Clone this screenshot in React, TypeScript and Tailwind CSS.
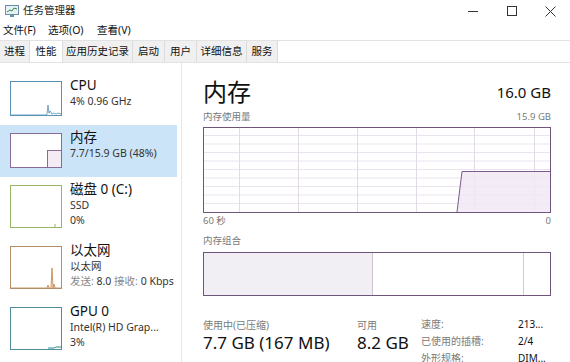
import React from "react";

const font = "font-['Noto_Sans','Noto_Sans_CJK_SC',sans-serif]";

type Item = {
  key: string;
  title: string;
  lines: React.ReactNode[];
  color: string;
  tall: boolean;
  selected?: boolean;
  draw: React.ReactNode;
};

function Thumb({ color, tall, children }: { color: string; tall: boolean; children: React.ReactNode }) {
  const h = tall ? 43 : 35;
  return (
    <svg width="52" height={h} viewBox={`0 0 52 ${h}`} className="shrink-0 bg-white">
      {children}
      <rect x="0.5" y="0.5" width="51" height={h - 1} fill="none" stroke={color} strokeWidth="1" />
    </svg>
  );
}

const items: Item[] = [
  {
    key: "cpu",
    title: "CPU",
    lines: ["4% 0.96 GHz"],
    color: "#5a92b6",
    tall: false,
    draw: (
      <polyline
        points="1,34 36,34 37,33 38,24 39,32 40,30 41,31 42,33 44,32 46,33 48,32 51,33"
        fill="#e8f1f7"
        stroke="#5a92b6"
        strokeWidth="0.8"
      />
    ),
  },
  {
    key: "mem",
    title: "内存",
    lines: ["7.7/15.9 GB (48%)"],
    color: "#8a6a97",
    tall: false,
    selected: true,
    draw: <rect x="37.5" y="17.5" width="14" height="17" fill="#f3ecf5" stroke="#8a6a97" strokeWidth="1" />,
  },
  {
    key: "disk",
    title: "磁盘 0 (C:)",
    lines: ["SSD", "0%"],
    color: "#95b765",
    tall: true,
    draw: <line x1="45" y1="42" x2="45" y2="39" stroke="#95b765" strokeWidth="1" />,
  },
  {
    key: "eth",
    title: "以太网",
    lines: [
      "以太网",
      <span key="s">
        <span className="text-[#8a8a8a]">发送: </span>8.0 <span className="text-[#8a8a8a]">接收: </span>0 Kbps
      </span>,
    ],
    color: "#b48e69",
    tall: true,
    draw: (
      <polyline
        points="1,42 37,42 38,39 39,42 41,42 42,22 43,42 44,38 45,42 51,42"
        fill="#f6eee6"
        stroke="#c08040"
        strokeWidth="0.8"
      />
    ),
  },
  {
    key: "gpu",
    title: "GPU 0",
    lines: ["Intel(R) HD Grap...", "3%"],
    color: "#4f8d9a",
    tall: true,
    draw: <polyline points="38,41 44,41 46,40 51,40" fill="none" stroke="#2f8a8a" strokeWidth="1" />,
  },
];

function Sidebar() {
  return (
    <div className="w-[182px] shrink-0 border-r border-[#e6e6e6] pt-[10px]">
      {items.map((it) => (
        <div
          key={it.key}
          className={`flex w-[177px] ${it.tall ? "h-[61px]" : "h-[52px]"} ${it.selected ? "bg-[#cce4f7]" : ""}`}
        >
          <div className="pl-[10px] pt-[8px]">
            <Thumb color={it.color} tall={it.tall}>
              {it.draw}
            </Thumb>
          </div>
          <div className="pl-[8px] pt-[4px] whitespace-nowrap">
            <div className="text-[13.5px] leading-[17px] text-[#111]">{it.title}</div>
            {it.lines.map((l, i) => (
              <div key={i} className="text-[10.5px] leading-[15px] text-[#333]">
                {l}
              </div>
            ))}
          </div>
        </div>
      ))}
    </div>
  );
}

function UsageGraph() {
  const w = 348;
  const h = 86;
  const vx = [36, 95, 154, 213, 271, 331];
  const hy = Array.from({ length: 9 }, (_, i) => 8.5 * (i + 1));
  return (
    <svg width={w} height={h} viewBox={`0 0 ${w} ${h}`} className="block">
      {hy.map((y) => (
        <line key={y} x1="0" y1={y} x2={w} y2={y} stroke="#ebe4ee" strokeWidth="1" />
      ))}
      {vx.map((x) => (
        <line key={x} x1={x + 0.5} y1="0" x2={x + 0.5} y2={h} stroke="#e2dae5" strokeWidth="1" />
      ))}
      <polygon points="254,85 259,44 347.5,44 347.5,85" fill="#f1e8f4" fillOpacity="0.85" />
      <polyline points="254,85 259,44.5 347.5,44.5" fill="none" stroke="#7c5a8a" strokeWidth="1" />
      <rect x="0.5" y="0.5" width={w - 1} height={h - 1} fill="none" stroke="#6f5579" strokeWidth="1" />
    </svg>
  );
}

function CompositionBar() {
  return (
    <div className="flex h-[44px] w-[348px] border border-[#6f5579]">
      <div className="w-[169px] bg-[#f2eff4] border-r border-[#cbc4ce]" />
      <div className="w-[151px] bg-white border-r border-[#cfcfcf]" />
      <div className="flex-1 bg-white" />
    </div>
  );
}

function Main() {
  return (
    <div className="flex-1 pl-[21px] pr-[19px] pt-[15px] min-w-0">
      <div className="flex items-center justify-between">
        <div className="text-[24px] leading-[28px] text-[#111]">内存</div>
        <div className="text-[15px] leading-[20px] text-[#111]">16.0 GB</div>
      </div>
      <div className="mt-[5px] flex justify-between text-[9.5px] leading-[12px] text-[#7a7a7a]">
        <span>内存使用量</span>
        <span>15.9 GB</span>
      </div>
      <div className="mt-[4px]">
        <UsageGraph />
      </div>
      <div className="mt-[2px] flex justify-between text-[9.5px] leading-[12px] text-[#7a7a7a]">
        <span>60 秒</span>
        <span>0</span>
      </div>
      <div className="mt-[8px] text-[9.5px] leading-[12px] text-[#7a7a7a]">内存组合</div>
      <div className="mt-[5px]">
        <CompositionBar />
      </div>
      <div className="mt-[20px] flex whitespace-nowrap">
        <div className="w-[154px] pt-[2px]">
          <div className="text-[10px] leading-[15px] text-[#7a7a7a]">使用中(已压缩)</div>
          <div className="text-[17px] leading-[20px] text-[#111]">7.7 GB (167 MB)</div>
        </div>
        <div className="w-[64px] pt-[2px]">
          <div className="text-[10px] leading-[15px] text-[#7a7a7a]">可用</div>
          <div className="text-[17px] leading-[20px] text-[#111]">8.2 GB</div>
        </div>
        <div className="flex text-[10px] leading-[17px]">
          <div className="w-[97px] text-[#7a7a7a]">
            <div>速度:</div>
            <div>已使用的插槽:</div>
            <div>外形规格:</div>
          </div>
          <div className="text-[#111]">
            <div>213...</div>
            <div>2/4</div>
            <div>DIM...</div>
          </div>
        </div>
      </div>
    </div>
  );
}

const tabs = [
  { label: "进程", w: "w-[30px]" },
  { label: "性能", w: "w-[33px]", active: true },
  { label: "应用历史记录", w: "w-[70px]" },
  { label: "启动", w: "w-[32px]" },
  { label: "用户", w: "w-[32px]" },
  { label: "详细信息", w: "w-[50px]" },
  { label: "服务", w: "w-[31px]" },
];

export default function App() {
  return (
    <div className={`w-[570px] h-[362px] overflow-hidden bg-white flex flex-col ${font}`}>
      <div className="h-[22px] flex items-center shrink-0">
        <svg width="15" height="13" viewBox="0 0 15 13" className="ml-[5px]">
          <rect x="0.5" y="0.5" width="13" height="9" fill="#e6f1f8" stroke="#6a8ea8" />
          <polyline points="2,7 5,5 7,6 9,3 12,4" fill="none" stroke="#3a8a3a" strokeWidth="1" />
          <rect x="5" y="10" width="4" height="2" fill="#6a8ea8" />
        </svg>
        <span className="ml-[3px] text-[10.5px] text-[#222]">任务管理器</span>
        <div className="ml-auto flex h-full">
          <div className="w-[39px] flex items-center justify-center">
            <div className="w-[10px] h-px bg-[#333]" />
          </div>
          <div className="w-[39px] flex items-center justify-center">
            <div className="w-[10px] h-[10px] border border-[#333]" />
          </div>
          <div className="w-[39px] flex items-center justify-center">
            <svg width="11" height="11" viewBox="0 0 11 11">
              <path d="M0.5 0.5 L10.5 10.5 M10.5 0.5 L0.5 10.5" stroke="#333" strokeWidth="1" />
            </svg>
          </div>
        </div>
      </div>
      <div className="h-[18px] flex items-center text-[10.5px] text-[#111] shrink-0">
        <span className="ml-[3px] w-[45px]">文件(F)</span>
        <span className="w-[49px]">选项(O)</span>
        <span>查看(V)</span>
      </div>
      <div className="h-[23px] flex border-t border-b border-[#e2e2e2] shrink-0">
        {tabs.map((t) => (
          <div
            key={t.label}
            className={`${t.w} flex items-center justify-center text-[10.5px] text-[#111] border-r border-[#dcdcdc] ${
              t.active ? "bg-white" : "bg-[#f0f0f0]"
            }`}
          >
            {t.label}
          </div>
        ))}
      </div>
      <div className="flex flex-1 min-h-0">
        <Sidebar />
        <Main />
      </div>
    </div>
  );
}
